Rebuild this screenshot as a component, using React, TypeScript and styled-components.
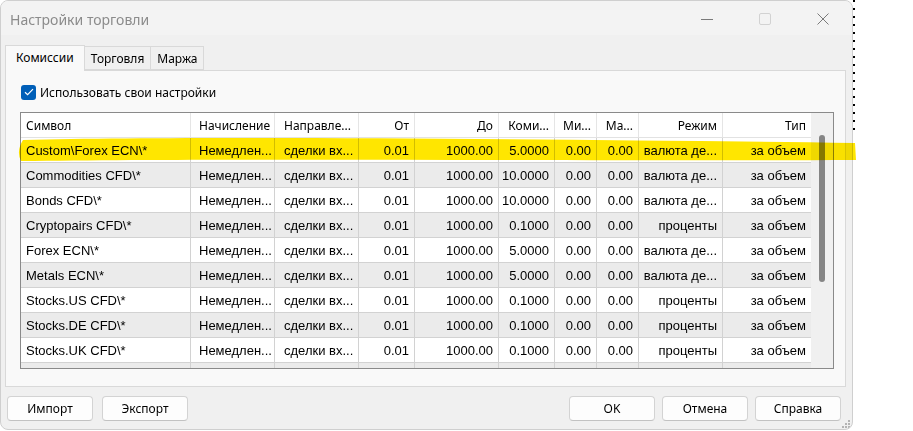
import styled, { createGlobalStyle } from "styled-components";

const GlobalStyle = createGlobalStyle`
  html, body {
    margin: 0;
    padding: 0;
    background: #ffffff;
  }
  * {
    box-sizing: border-box;
  }
`;

type Align = "left" | "right";

const columns: { title: string; width: number; align: Align; pad: number }[] = [
  { title: "Символ", width: 170, align: "left", pad: 5 },
  { title: "Начисление", width: 84, align: "left", pad: 8 },
  { title: "Направле...", width: 84, align: "left", pad: 9 },
  { title: "От", width: 56, align: "right", pad: 5 },
  { title: "До", width: 84, align: "right", pad: 5 },
  { title: "Коми...", width: 56, align: "right", pad: 5 },
  { title: "Ми...", width: 42, align: "right", pad: 5 },
  { title: "Ма...", width: 42, align: "right", pad: 5 },
  { title: "Режим", width: 84, align: "right", pad: 5 },
  { title: "Тип", width: 88, align: "right", pad: 5 },
];

const gridTemplate = columns.map((c) => `${c.width}px`).join(" ");

const rows: string[][] = [
  ["Custom\\Forex ECN\\*", "5.0000", "валюта де..."],
  ["Commodities CFD\\*", "10.0000", "валюта де..."],
  ["Bonds CFD\\*", "10.0000", "валюта де..."],
  ["Cryptopairs CFD\\*", "0.1000", "проценты"],
  ["Forex ECN\\*", "5.0000", "валюта де..."],
  ["Metals ECN\\*", "5.0000", "валюта де..."],
  ["Stocks.US CFD\\*", "0.1000", "проценты"],
  ["Stocks.DE CFD\\*", "0.1000", "проценты"],
  ["Stocks.UK CFD\\*", "0.1000", "проценты"],
].map(([sym, fee, mode]) => [
  sym,
  "Немедлен...",
  "сделки вх...",
  "0.01",
  "1000.00",
  fee,
  "0.00",
  "0.00",
  mode,
  "за объем",
]);

export default function App() {
  return (
    <>
      <GlobalStyle />
      <Page>
        <Window>
          <TitleBar>
            <Title>Настройки торговли</Title>
            <Controls>
              <Control>
                <svg width="12" height="12" viewBox="0 0 12 12">
                  <path d="M0 6.5h12" stroke="#7a7a7a" strokeWidth="1" />
                </svg>
              </Control>
              <Control>
                <svg width="12" height="12" viewBox="0 0 12 12">
                  <rect x="0.5" y="0.5" width="11" height="11" rx="1.5" fill="none" stroke="#d2d2d2" />
                </svg>
              </Control>
              <Control>
                <svg width="12" height="12" viewBox="0 0 12 12">
                  <path d="M0.5 0.5l11 11M11.5 0.5l-11 11" stroke="#7a7a7a" strokeWidth="1" />
                </svg>
              </Control>
            </Controls>
          </TitleBar>

          <Body>
            <TabStrip>
              <Tab $active>Комиссии</Tab>
              <Tab>Торговля</Tab>
              <Tab>Маржа</Tab>
            </TabStrip>

            <Panel>
              <CheckRow>
                <CheckBox>
                  <svg width="10" height="8" viewBox="0 0 10 8">
                    <path d="M1 4.2l2.6 2.5L9 1.2" fill="none" stroke="#fff" strokeWidth="1.2" />
                  </svg>
                </CheckBox>
                <CheckLabel>Использовать свои настройки</CheckLabel>
              </CheckRow>

              <Table>
                <Grid>
                  <HeaderRow>
                    {columns.map((c) => (
                      <HeadCell key={c.title} $align={c.align} $pad={c.pad}>
                        {c.title}
                      </HeadCell>
                    ))}
                  </HeaderRow>
                  {rows.map((r, i) => (
                    <Row key={r[0]} $odd={i % 2 === 1}>
                      {r.map((v, j) => (
                        <Cell key={j} $align={columns[j].align} $pad={j === 0 ? 5 : columns[j].pad}>
                          {v}
                        </Cell>
                      ))}
                    </Row>
                  ))}
                  <Row $odd>
                    {columns.map((c) => (
                      <Cell key={c.title} $align={c.align} $pad={c.pad} />
                    ))}
                  </Row>
                </Grid>
                <ScrollTrack>
                  <ScrollThumb />
                </ScrollTrack>
              </Table>
            </Panel>

            <ButtonBar>
              <ButtonGroup $gap={9}>
                <Button>Импорт</Button>
                <Button>Экспорт</Button>
              </ButtonGroup>
              <ButtonGroup $gap={7}>
                <Button>OK</Button>
                <Button>Отмена</Button>
                <Button>Справка</Button>
              </ButtonGroup>
            </ButtonBar>
          </Body>

          <Grip>
            <svg width="9" height="9" viewBox="0 0 9 9">
              {[
                [7, 1],
                [4, 4],
                [7, 4],
                [1, 7],
                [4, 7],
                [7, 7],
              ].map(([x, y]) => (
                <rect key={`${x}-${y}`} x={x} y={y} width="2" height="2" fill="#b4b4b4" />
              ))}
            </svg>
          </Grip>
        </Window>

        <Aside>
          <DottedEdge />
        </Aside>

        <Marker width="913" height="431" viewBox="0 0 913 431">
          <path
            d="M23 140 C 200 136, 560 139, 855 143 L 856 160 C 600 161, 240 158, 21 161 Q 16 151 23 140 Z"
            fill="#ffe600"
          />
        </Marker>
      </Page>
    </>
  );
}

const Page = styled.div`
  position: relative;
  display: flex;
  width: 913px;
  height: 431px;
  overflow: hidden;
  background: #ffffff;
`;

const Window = styled.div`
  position: relative;
  display: flex;
  flex-direction: column;
  width: 853px;
  height: 430px;
  background: #f0f0f0;
  border: 1px solid #cfcfcf;
  border-radius: 8px;
  overflow: hidden;
`;

const TitleBar = styled.div`
  display: flex;
  align-items: center;
  height: 34px;
  flex: none;
  background: #f3f3f3;
  padding-left: 9px;
`;

const Title = styled.div`
  flex: 1;
  font-family: "Noto Sans", "Open Sans", sans-serif;
  font-size: 14px;
  color: #8b8b8b;
  margin-top: 2px;
`;

const Controls = styled.div`
  display: flex;
  height: 100%;
`;

const Control = styled.div`
  width: 58px;
  display: flex;
  align-items: center;
  justify-content: center;
  padding-top: 2px;
`;

const Body = styled.div`
  display: flex;
  flex-direction: column;
  padding: 10px 6px 0 4px;
`;

const TabStrip = styled.div`
  display: flex;
  align-items: flex-end;
  height: 25px;
`;

const Tab = styled.div<{ $active?: boolean }>`
  position: relative;
  z-index: ${(p) => (p.$active ? 1 : 0)};
  height: ${(p) => (p.$active ? 26 : 24)}px;
  margin-bottom: ${(p) => (p.$active ? -1 : 0)}px;
  padding: 0 ${(p) => (p.$active ? 10 : 6)}px;
  display: flex;
  align-items: center;
  background: ${(p) => (p.$active ? "#f9f9f9" : "#f0f0f0")};
  border: 1px solid #d9d9d9;
  border-bottom: ${(p) => (p.$active ? "none" : "1px solid #d9d9d9")};
  margin-left: ${(p) => (p.$active ? 0 : -1)}px;
  font-family: "Noto Sans", "Open Sans", sans-serif;
  font-size: 12px;
  color: #000;
  padding-bottom: ${(p) => (p.$active ? 3 : 0)}px;
`;

const Panel = styled.div`
  display: flex;
  flex-direction: column;
  height: 317px;
  background: #f9f9f9;
  border: 1px solid #d9d9d9;
  padding: 13px 11px 0 14px;
`;

const CheckRow = styled.div`
  display: flex;
  align-items: center;
  height: 16px;
  margin-left: 1px;
  gap: 4px;
`;

const CheckBox = styled.div`
  width: 15px;
  height: 15px;
  border-radius: 3px;
  background: #005fb8;
  display: flex;
  align-items: center;
  justify-content: center;
`;

const CheckLabel = styled.span`
  font-family: "Noto Sans", "Open Sans", sans-serif;
  font-size: 12px;
  color: #000;
`;

const Table = styled.div`
  display: flex;
  margin-top: 12px;
  width: 814px;
  height: 257px;
  border: 1px solid #8a8a8a;
  background: #ffffff;
  overflow: hidden;
`;

const Grid = styled.div`
  width: 790px;
  display: flex;
  flex-direction: column;
`;

const HeaderRow = styled.div`
  display: grid;
  grid-template-columns: ${gridTemplate};
  height: 25px;
  flex: none;
  background: #ffffff;
  border-bottom: 1px solid #e2e2e2;
`;

const HeadCell = styled.div<{ $align: Align; $pad: number }>`
  display: flex;
  align-items: center;
  justify-content: ${(p) => (p.$align === "right" ? "flex-end" : "flex-start")};
  padding: 0 ${(p) => p.$pad}px;
  border-right: 1px solid #e5e5e5;
  font-family: "Noto Sans", "Open Sans", sans-serif;
  font-size: 12px;
  color: #000;
  white-space: nowrap;
  overflow: hidden;
  &:last-child {
    border-right: none;
  }
`;

const Row = styled.div<{ $odd?: boolean }>`
  display: grid;
  grid-template-columns: ${gridTemplate};
  height: 25px;
  flex: none;
  background: ${(p) => (p.$odd ? "#ebebeb" : "#ffffff")};
  border-bottom: 1px solid #d2d2d2;
`;

const Cell = styled.div<{ $align: Align; $pad: number }>`
  display: flex;
  align-items: center;
  justify-content: ${(p) => (p.$align === "right" ? "flex-end" : "flex-start")};
  padding: 0 ${(p) => p.$pad}px;
  border-right: 1px solid #d2d2d2;
  font-family: "Liberation Sans", Arial, sans-serif;
  font-size: 13px;
  color: #000;
  white-space: nowrap;
  overflow: hidden;
  &:last-child {
    border-right: none;
  }
`;

const ScrollTrack = styled.div`
  width: 22px;
  flex: none;
  background: #f0f0f0;
  display: flex;
  justify-content: center;
  padding-top: 22px;
`;

const ScrollThumb = styled.div`
  width: 6px;
  height: 147px;
  border-radius: 3px;
  background: #858585;
`;

const ButtonBar = styled.div`
  display: flex;
  justify-content: space-between;
  margin-top: 9px;
  padding: 0 5px 0 2px;
`;

const ButtonGroup = styled.div<{ $gap: number }>`
  display: flex;
  gap: ${(p) => p.$gap}px;
`;

const Button = styled.div`
  width: 86px;
  height: 25px;
  display: flex;
  align-items: center;
  justify-content: center;
  background: #fdfdfd;
  border: 1px solid #d3d3d3;
  border-bottom-color: #c2c2c2;
  border-radius: 4px;
  font-family: "Noto Sans", "Open Sans", sans-serif;
  font-size: 12px;
  color: #000;
`;

const Grip = styled.div`
  position: absolute;
  right: 2px;
  bottom: 1px;
  width: 9px;
  height: 9px;
  display: flex;
`;

const Aside = styled.div`
  flex: 1;
  display: flex;
`;

const DottedEdge = styled.div`
  width: 2px;
  height: 132px;
  background: repeating-linear-gradient(
    to bottom,
    #000 0 2px,
    transparent 2px 8px
  );
`;

const Marker = styled.svg`
  position: absolute;
  left: 0;
  top: 0;
  pointer-events: none;
  mix-blend-mode: multiply;
`;
